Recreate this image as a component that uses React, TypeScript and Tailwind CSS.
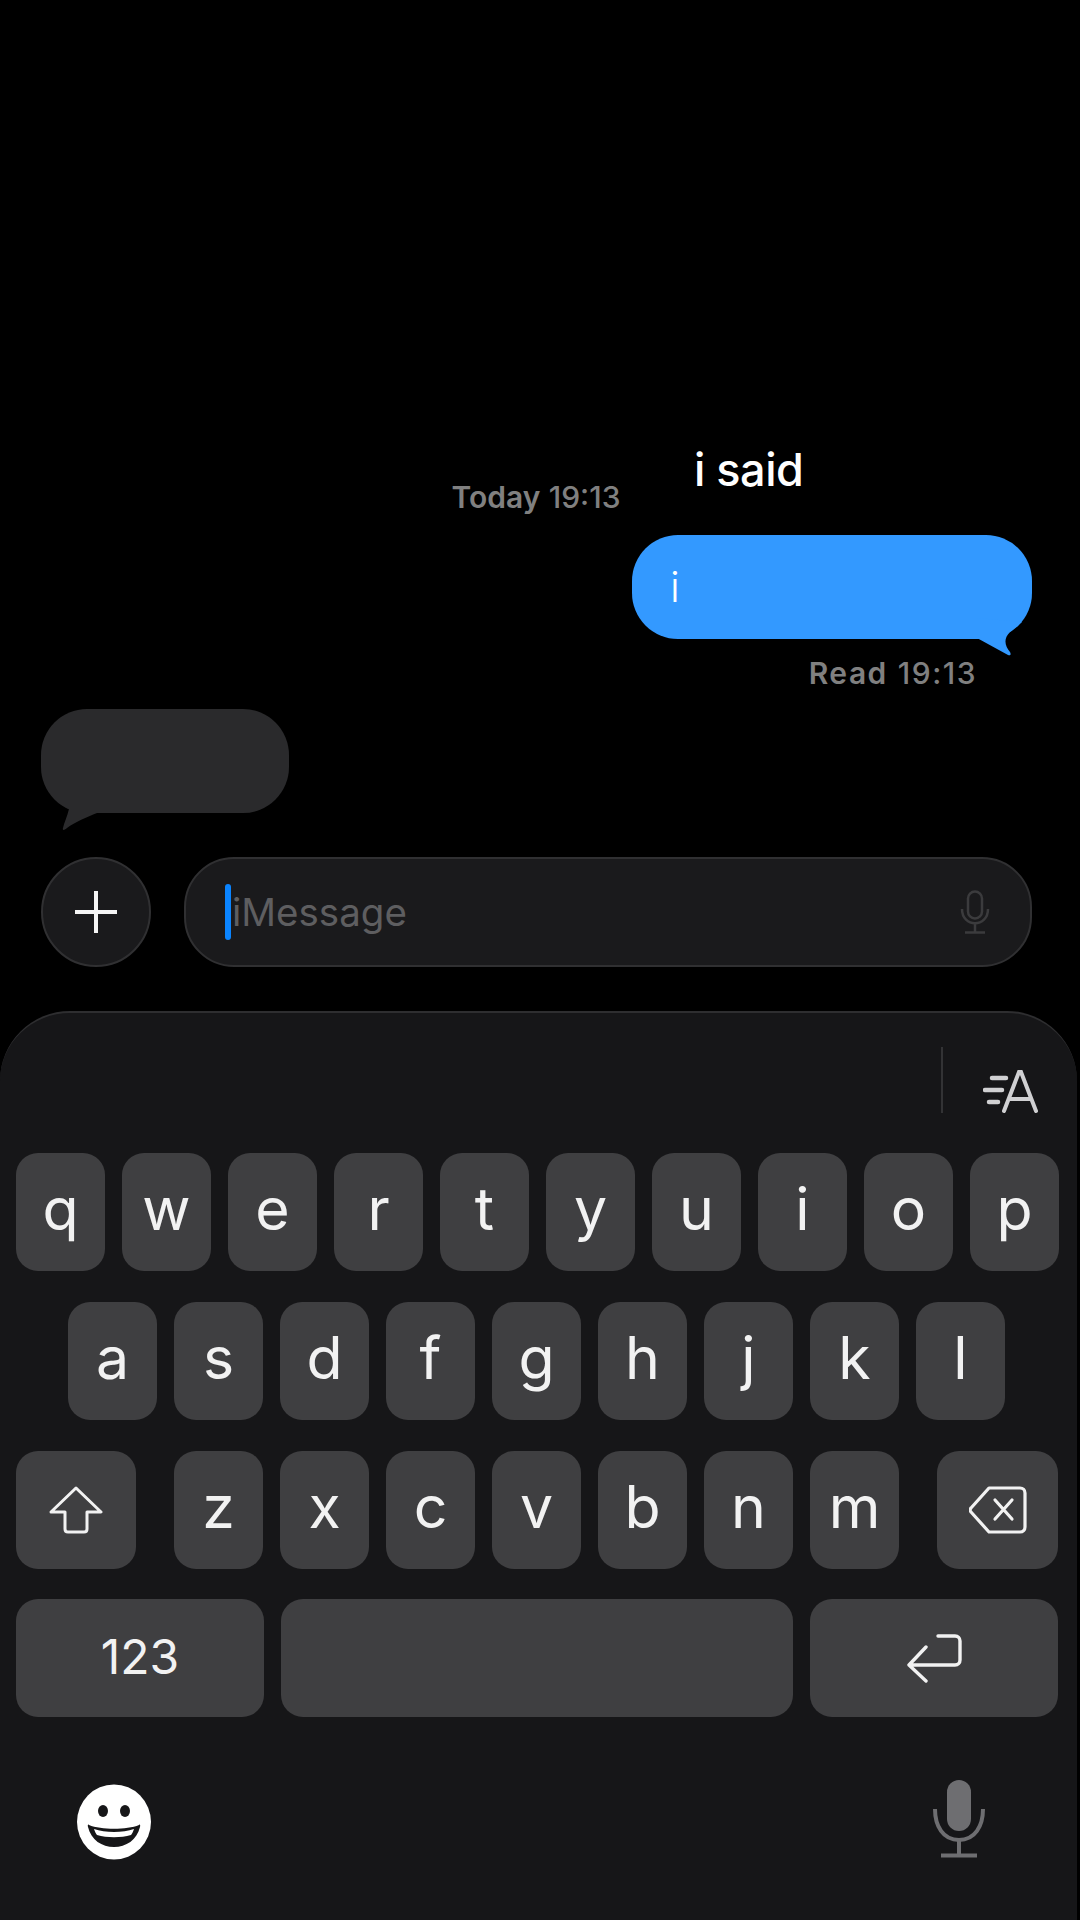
import React from "react";

const rowOne = ["q", "w", "e", "r", "t", "y", "u", "i", "o", "p"];
const rowTwo = ["a", "s", "d", "f", "g", "h", "j", "k", "l"];
const rowThree = ["z", "x", "c", "v", "b", "n", "m"];

const font = "font-['Inter','Liberation_Sans',sans-serif]";

const Key = ({ label }: { label: string }) => (
  <div className="w-[89px] h-[118px] rounded-[22px] bg-[#3f3f41] flex items-center justify-center text-[59px] leading-none text-[#f2f2f2] pb-[7px]">
    {label}
  </div>
);

const App = () => {
  return (
    <div className={`relative w-[1080px] h-[1920px] overflow-hidden bg-black ${font}`}>
      {/* caption on top of the video */}
      <div className="absolute left-[694px] top-[442px] text-[45px] leading-[56px] font-medium text-white tracking-[-0.5px]">
        i said
      </div>

      <div className="flex flex-col pt-[480px]">
        <div className="h-[34px] leading-[34px] text-[30px] text-center text-[#808080] pr-[8px]">
          <span className="font-semibold">Today</span> <span className="font-medium">19:13</span>
        </div>

        {/* sent */}
        <div className="mt-[21px] flex justify-end pr-[48px]">
          <div className="relative w-[400px] h-[104px] rounded-[46px] bg-[#3399ff] flex items-center pl-[38px]">
            <span className="text-[42px] font-light text-white leading-none">i</span>
            <svg className="absolute left-[340px] top-[80px]" width="60" height="42" viewBox="0 0 60 42">
              <path d="M5 23 L36 40 C39 41 39 39 38 37 C33 31 31 24 38 17 L50 7 L5 3 Z" fill="#3399ff" />
            </svg>
          </div>
        </div>
        <div className="mt-[17px] h-[34px] leading-[34px] text-[30px] tracking-[1.5px] text-right pr-[103px] text-[#808080]">
          <span className="font-semibold">Read</span> <span className="font-medium">19:13</span>
        </div>

        {/* received */}
        <div className="mt-[19px] pl-[41px]">
          <div className="relative w-[248px] h-[104px] rounded-[46px] bg-[#2a2a2c]">
            <svg className="absolute left-0 top-[78px]" width="70" height="44" viewBox="0 0 70 44">
              <path d="M6 0 C12 14 24 20 28 22 C26 30 23 36 22 41 C21 44 24 43 26 41 C34 35 46 30 56 26 L56 0 Z" fill="#2a2a2c" />
            </svg>
          </div>
        </div>

        {/* compose */}
        <div className="mt-[44px] flex items-center pl-[41px] pr-[48px] gap-[33px]">
          <div className="w-[110px] h-[110px] shrink-0 rounded-full bg-[#1a1a1c] border-2 border-[#303032] flex items-center justify-center">
            <svg width="44" height="44" viewBox="0 0 44 44">
              <path d="M22 1 V43 M1 22 H43" stroke="#f5f5f5" strokeWidth="4" fill="none" />
            </svg>
          </div>
          <div className="flex-1 h-[110px] rounded-[50px] bg-[#1a1a1c] border-2 border-[#303032] flex items-center pl-[39px] pr-[40px]">
            <span className="w-[6px] h-[56px] rounded-full bg-[#0a84ff]" />
            <span className="ml-[1px] text-[38.5px] leading-none text-[#5e5e60]">iMessage</span>
            <svg className="ml-auto" width="30" height="44" viewBox="0 0 30 44" fill="none">
              <rect x="8" y="1.5" width="14" height="27" rx="7" stroke="#3b3b3d" strokeWidth="2.5" />
              <path d="M2 19 C2 38 28 38 28 19 M15 34 V42 M5 42.5 H25" stroke="#3b3b3d" strokeWidth="2.5" />
            </svg>
          </div>
        </div>

        {/* keyboard */}
        <div className="mt-[44px] w-[1077px] h-[909px] rounded-t-[70px] bg-[#161618] border-t-2 border-[#2e2e30] flex flex-col pl-[16px]">
          <div className="h-[140px] flex items-start justify-end pr-[38px] pt-[34px]">
            <div className="w-[2px] h-[66px] bg-[#333335]" />
            <svg className="ml-[40px] mt-[22px]" width="56" height="44" viewBox="0 0 56 44" fill="none" stroke="#d0d0d2" strokeLinecap="round">
              <path d="M21 42 L36 3 L38 3 L53 42 M26 30 H48" strokeWidth="4" />
              <path d="M9 9 H23 M2 21 H19 M6 33 H15" strokeWidth="4.5" />
            </svg>
          </div>

          <div className="flex gap-[17px]">
            {rowOne.map((k) => (
              <Key key={k} label={k} />
            ))}
          </div>

          <div className="mt-[31px] flex gap-[17px] pl-[52px]">
            {rowTwo.map((k) => (
              <Key key={k} label={k} />
            ))}
          </div>

          <div className="mt-[31px] flex">
            <div className="w-[120px] h-[118px] rounded-[22px] bg-[#3f3f41] flex items-center justify-center">
              <svg width="56" height="50" viewBox="0 0 56 50" fill="none">
                <path d="M28 3 L53 27 H39 V44 C39 46 38 47 36 47 H20 C18 47 17 46 17 44 V27 H3 Z" stroke="#f2f2f2" strokeWidth="3" strokeLinejoin="round" />
              </svg>
            </div>
            <div className="ml-[38px] flex gap-[17px]">
              {rowThree.map((k) => (
                <Key key={k} label={k} />
              ))}
            </div>
            <div className="ml-[38px] w-[121px] h-[118px] rounded-[22px] bg-[#3f3f41] flex items-center justify-center">
              <svg width="58" height="48" viewBox="0 0 58 48" fill="none" stroke="#f2f2f2" strokeLinejoin="round">
                <path d="M20 2 H51 C54 2 56 4 56 7 V41 C56 44 54 46 51 46 H20 L2 26 C1 25 1 23 2 22 Z" strokeWidth="3.2" />
                <path d="M26 14 L43 33 M43 14 L26 33" strokeWidth="3.2" strokeLinecap="round" />
              </svg>
            </div>
          </div>

          <div className="mt-[30px] flex gap-[17px]">
            <div className="w-[248px] h-[118px] rounded-[22px] bg-[#3f3f41] flex items-center justify-center text-[48px] leading-none text-[#f2f2f2] pb-[3px]">
              123
            </div>
            <div className="w-[512px] h-[118px] rounded-[22px] bg-[#3f3f41]" />
            <div className="w-[248px] h-[118px] rounded-[22px] bg-[#3f3f41] flex items-center justify-center">
              <svg width="56" height="50" viewBox="0 0 56 50" fill="none" stroke="#f2f2f2" strokeWidth="3.4" strokeLinecap="round" strokeLinejoin="round">
                <path d="M32 3 H49 C52 3 54 5 54 8 V27 C54 30 52 32 49 32 H3 M20 14 L3 32 L20 48" />
              </svg>
            </div>
          </div>

          <div className="mt-[63px] flex justify-between pl-[61px] pr-[92px]">
            <svg width="74" height="76" viewBox="0 0 74 76" className="mt-[4px]">
              <ellipse cx="37" cy="38" rx="37" ry="37.5" fill="#ffffff" />
              <ellipse cx="26" cy="27" rx="5" ry="6" fill="#161618" />
              <ellipse cx="48" cy="27" rx="5" ry="6" fill="#161618" />
              <path d="M12 41 C24 46 50 46 62 41 C63 40 63.5 41 63 43 C60 56 49 63 37 63 C25 63 14 56 11 43 C10.5 41 11 40 12 41 Z" fill="#161618" />
              <path d="M17 45 C28 49 46 49 57 45 C56 48 55 50 54 51 C44 54 30 54 20 51 C19 50 18 48 17 45 Z" fill="#ffffff" />
            </svg>
            <svg width="52" height="78" viewBox="0 0 52 78" fill="none">
              <rect x="14" y="0" width="24" height="51" rx="12" fill="#6e6e71" />
              <path d="M2 29 C2 46 10 60 26 60 C42 60 50 46 50 29 M26 60 V75 M8 75.5 H44" stroke="#6e6e71" strokeWidth="4" />
            </svg>
          </div>
        </div>
      </div>
    </div>
  );
};

export default App;
